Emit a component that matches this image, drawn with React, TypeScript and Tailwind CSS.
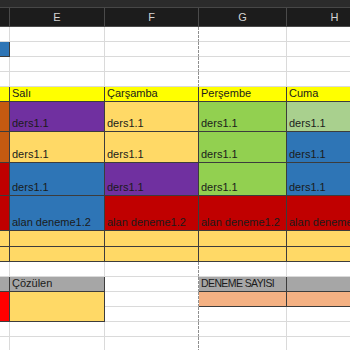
import React from 'react';

type CellProps = { bg?: string; text?: string; dark?: boolean; dashed?: boolean; span?: string; cls?: string };

// one spreadsheet cell, text sits at the bottom like Excel does
const Cell = ({ bg = 'bg-white', text, dark, dashed, span = '', cls = 'text-[11px]' }: CellProps) => {
  const border = dark
    ? 'border-r border-b border-[#3c3c3c]'
    : dashed
    ? 'border-b border-[#dadada] border-r border-r-[#8f8f8f] [border-right-style:dashed]'
    : 'border-r border-b border-[#dadada]';
  return (
    <div className={`${bg} ${border} ${span} ${cls} flex items-end overflow-hidden whitespace-nowrap pl-[2px] pb-[1px] leading-[13px] text-[#1b1b1b]`}>
      {text}
    </div>
  );
};

const WhiteRow = () => (
  <>
    <Cell />
    <Cell />
    <Cell dashed />
    <Cell />
    <Cell />
  </>
);

export default function App() {
  const head = 'bg-[#1c1c1c] border-r border-b border-[#4a4a4a] flex items-center justify-center text-[11px] text-[#d4d4d4]';

  return (
    <div className="w-[350px] h-[350px] overflow-hidden bg-white font-['Liberation_Sans',Arial,sans-serif]">
      <div className="grid w-max grid-cols-[10px_95px_94px_88px_96px] grid-rows-[8px_19px_15px_15px_15px_15px_15px_30px_31px_33px_35px_16px_15px_15px_15px_15px_15px_15px_15px]">
        {/* top toolbar strip */}
        <div className="col-span-5 bg-[#2b2b2b] border-b border-[#474747]" />

        {/* column headers */}
        <div className={head} />
        <div className={head}>E</div>
        <div className={head}>F</div>
        <div className={head}>G</div>
        <div className={head}>H</div>

        {/* empty rows */}
        <WhiteRow />
        <Cell bg="bg-[#2e75b6]" dark />
        <Cell />
        <Cell dashed />
        <Cell />
        <Cell />
        <WhiteRow />
        <WhiteRow />

        {/* days */}
        <Cell bg="bg-[#ffff00]" dark />
        <Cell bg="bg-[#ffff00]" dark text="Salı" />
        <Cell bg="bg-[#ffff00]" dark text="Çarşamba" />
        <Cell bg="bg-[#ffff00]" dark text="Perşembe" />
        <Cell bg="bg-[#ffff00]" dark text="Cuma" />

        {/* lessons */}
        <Cell bg="bg-[#c55a11]" dark />
        <Cell bg="bg-[#7030a0]" dark text="ders1.1" />
        <Cell bg="bg-[#ffd966]" dark text="ders1.1" />
        <Cell bg="bg-[#92d050]" dark text="ders1.1" />
        <Cell bg="bg-[#a9d08e]" dark text="ders1.1" />

        <Cell bg="bg-[#c55a11]" dark />
        <Cell bg="bg-[#ffd966]" dark text="ders1.1" />
        <Cell bg="bg-[#ffd966]" dark text="ders1.1" />
        <Cell bg="bg-[#92d050]" dark text="ders1.1" />
        <Cell bg="bg-[#2e75b6]" dark text="ders1.1" />

        <Cell bg="bg-[#c00000]" dark />
        <Cell bg="bg-[#2e75b6]" dark text="ders1.1" />
        <Cell bg="bg-[#7030a0]" dark text="ders1.1" />
        <Cell bg="bg-[#92d050]" dark text="ders1.1" />
        <Cell bg="bg-[#2e75b6]" dark text="ders1.1" />

        <Cell bg="bg-[#c00000]" dark />
        <Cell bg="bg-[#2e75b6]" dark text="alan deneme1.2" />
        <Cell bg="bg-[#c00000]" dark text="alan deneme1.2" />
        <Cell bg="bg-[#c00000]" dark text="alan deneme1.2" />
        <Cell bg="bg-[#c00000]" dark text="alan deneme1.2" />

        {[0, 1].map((i) => (
          <React.Fragment key={i}>
            <Cell bg="bg-[#ffd966]" dark />
            <Cell bg="bg-[#ffd966]" dark />
            <Cell bg="bg-[#ffd966]" dark />
            <Cell bg="bg-[#ffd966]" dark />
            <Cell bg="bg-[#ffd966]" dark />
          </React.Fragment>
        ))}

        <WhiteRow />

        {/* summary block */}
        <Cell bg="bg-[#a6a6a6]" dark />
        <Cell bg="bg-[#a6a6a6]" dark text="Çözülen" />
        <Cell dashed />
        <Cell bg="bg-[#a6a6a6]" dark text="DENEME SAYISI" cls="text-[10.5px] tracking-[-0.6px]" />
        <Cell bg="bg-[#a6a6a6]" dark />

        <Cell bg="bg-[#ff0000]" dark span="row-span-2" />
        <Cell bg="bg-[#ffd966]" dark span="row-span-2" />
        <Cell dashed />
        <Cell bg="bg-[#f4b183]" dark />
        <Cell bg="bg-[#f4b183]" dark />

        <Cell dashed />
        <Cell />
        <Cell />

        <WhiteRow />
        <WhiteRow />
      </div>
    </div>
  );
}
